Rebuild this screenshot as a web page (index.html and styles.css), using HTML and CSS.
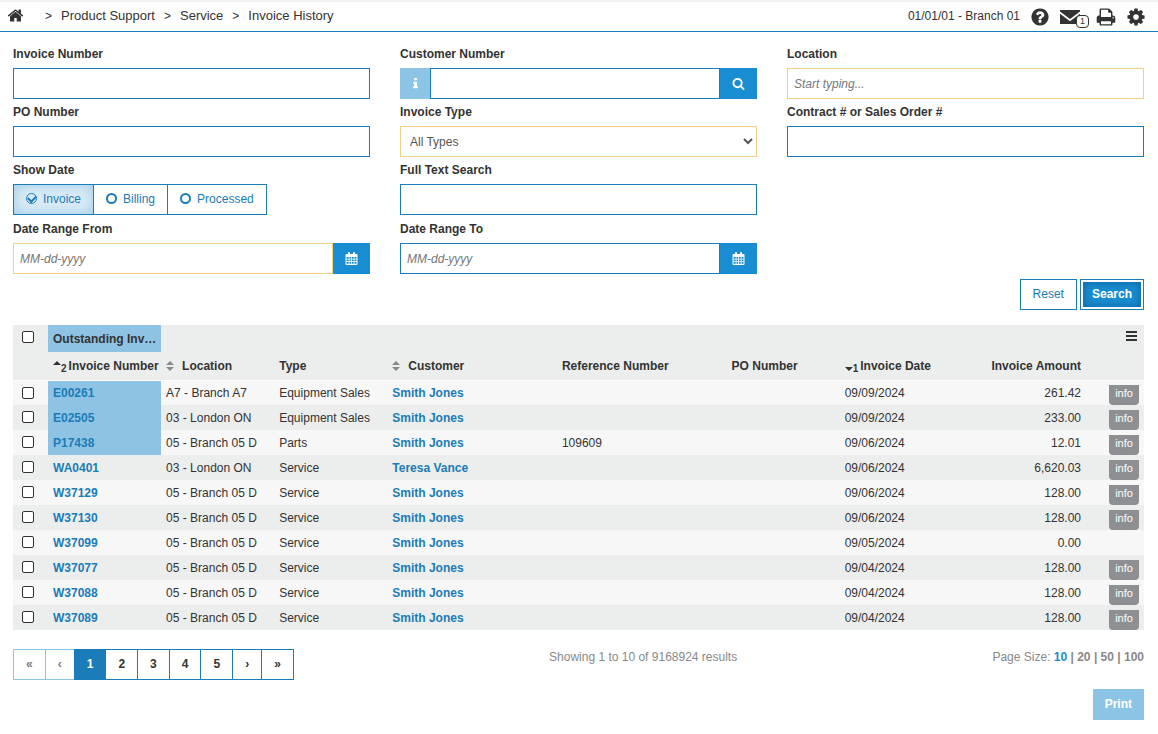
FILE: index.html
```html
<!DOCTYPE html>
<html lang="en">

<head>
    <meta charset="UTF-8">
    <meta name="viewport" content="width=device-width, initial-scale=1.0">
    <title>Invoice History</title>
    <link rel="stylesheet" href="styles.css">
</head>

<body>

    <!-- icon set -->
    <svg class="icon-set" aria-hidden="true">
        <symbol id="home" viewBox="0 0 1792 1792">
            <path d="M1472 992v480q0 26-19 45t-45 19h-384v-384h-256v384h-384q-26 0-45-19t-19-45v-480q0-1 .5-3t.5-3l575-474 575 474q1 2 1 6zm223-69l-62 74q-8 9-21 11h-3q-13 0-21-7l-692-577-692 577q-12 8-24 7-13-2-21-11l-62-74q-8-10-7-23.5t11-21.5l719-599q32-26 76-26t76 26l244 204v-195q0-14 9-23t23-9h192q14 0 23 9t9 23v408l219 182q10 8 11 21.5t-7 23.5z" />
        </symbol>
        <symbol id="help" viewBox="0 0 1792 1792">
            <path d="M1024 1376v-192q0-14-9-23t-23-9h-192q-14 0-23 9t-9 23v192q0 14 9 23t23 9h192q14 0 23-9t9-23zm256-672q0-88-55.500-163t-138.500-116-170-41q-243 0-371 213-15 24 8 42l132 100q7 6 19 6 16 0 25-12 53-68 86-92 34-24 86-24 48 0 85.500 26t37.500 59q0 38-20 61t-68 45q-63 28-115.500 86.500t-52.500 125.500v36q0 14 9 23t23 9h192q14 0 23-9t9-23q0-19 21.500-49.500t54.500-49.500q32-18 49-28.500t46-35 44.500-48 28-60.500 12.500-81zm384 192q0 209-103 385.500t-279.500 279.500-385.500 103-385.500-103-279.500-279.500-103-385.500 103-385.500 279.500-279.500 385.500-103 385.500 103 279.500 279.500 103 385.500z" />
        </symbol>
        <symbol id="mail" viewBox="0 0 20 14">
            <path d="M0 0h20v1.500l-10 7.500-10-7.500zM0 3.700l10 7.500 10-7.500v10.300h-20z" />
        </symbol>
        <symbol id="print" viewBox="0 0 1792 1792">
            <path d="M448 1536h896v-256h-896v256zm0-640h896v-384h-160q-40 0-68-28t-28-68v-160h-640v640zm1152 64q0-26-19-45t-45-19-45 19-19 45 19 45 45 19 45-19 19-45zm128 0v416q0 13-9.500 22.500t-22.500 9.500h-224v160q0 40-28 68t-68 28h-960q-40 0-68-28t-28-68v-160h-224q-13 0-22.500-9.500t-9.500-22.500v-416q0-79 56.500-135.500t135.500-56.500h64v-544q0-40 28-68t68-28h672q40 0 88 20t76 48l152 152q28 28 48 76t20 88v256h64q79 0 135.500 56.500t56.500 135.500z" />
        </symbol>
        <symbol id="cog" viewBox="0 0 1792 1792">
            <path d="M1152 896q0-106-75-181t-181-75-181 75-75 181 75 181 181 75 181-75 75-181zm512-109v222q0 12-8 23t-20 13l-185 28q-19 54-39 91 35 50 107 138 10 12 10 25t-9 23q-27 37-99 108t-94 71q-12 0-26-9l-138-108q-44 23-91 38-16 136-29 186-7 28-36 28h-222q-14 0-24.500-8.500t-11.500-21.500l-28-184q-49-16-90-37l-141 107q-10 9-25 9-14 0-25-11-126-114-165-168-7-10-7-23 0-12 8-23 15-21 51-66.500t54-70.500q-27-50-41-99l-183-27q-13-2-21-12.500t-8-23.500v-222q0-12 8-23t19-13l186-28q14-46 39-92-40-57-107-138-10-12-10-24 0-10 9-23 26-36 98.500-107.500t94.500-71.500q13 0 26 10l138 107q44-23 91-38 16-136 29-186 7-28 36-28h222q14 0 24.500 8.500t11.500 21.500l28 184q49 16 90 37l142-107q9-9 24-9 13 0 25 10 129 119 165 170 7 8 7 22 0 12-8 23-15 21-51 66.500t-54 70.500q26 50 41 98l183 28q13 2 21 12.500t8 23.500z" />
        </symbol>
        <symbol id="info" viewBox="0 0 1792 1792">
            <path d="M1216 1344v128q0 26-19 45t-45 19h-512q-26 0-45-19t-19-45v-128q0-26 19-45t45-19h64v-384h-64q-26 0-45-19t-19-45v-128q0-26 19-45t45-19h384q26 0 45 19t19 45v576h64q26 0 45 19t19 45zm-128-1152v192q0 26-19 45t-45 19h-256q-26 0-45-19t-19-45v-192q0-26 19-45t45-19h256q26 0 45 19t19 45z" />
        </symbol>
        <symbol id="search" viewBox="0 0 1792 1792">
            <path d="M1216 832q0-185-131.500-316.500t-316.500-131.500-316.500 131.500-131.500 316.500 131.500 316.500 316.500 131.500 316.500-131.500 131.500-316.500zm512 832q0 52-38 90t-90 38q-54 0-90-38l-343-342q-179 124-399 124-143 0-273.500-55.500t-225-150-150-225-55.500-273.500 55.500-273.500 150-225 225-150 273.500-55.500 273.500 55.500 225 150 150 225 55.500 273.500q0 220-124 399l343 343q37 37 37 90z" />
        </symbol>
        <symbol id="calendar" viewBox="0 0 12 13">
            <path fill-rule="evenodd" d="M1 2h1.500v-1q0-1 1-1t1 1v1h3v-1q0-1 1-1t1 1v1h1.500q1 0 1 1v9q0 1-1 1h-10q-1 0-1-1v-9q0-1 1-1zM1 5v1.800h2.200v-1.800zM4 5v1.800h1.700v-1.800zM6.500 5v1.800h1.700v-1.800zM9 5v1.800h2v-1.800zM1 7.500v1.800h2.200v-1.800zM4 7.500v1.800h1.700v-1.800zM6.500 7.500v1.800h1.700v-1.800zM9 7.500v1.800h2v-1.800zM1 10v1.800h2.200v-1.800zM4 10v1.800h1.700v-1.800zM6.500 10v1.800h1.700v-1.800zM9 10v1.800h2v-1.800z" />
        </symbol>
        <symbol id="bars" viewBox="0 0 11 10">
            <path d="M0 0h11v2h-11zM0 4h11v2h-11zM0 8h11v2h-11z" />
        </symbol>
        <symbol id="sort" viewBox="0 0 8 10">
            <path d="M4 0l4 4h-8zM4 10l-4-4h8z" />
        </symbol>
        <symbol id="sort-up" viewBox="0 0 8 10">
            <path d="M4 0l4 4h-8z" />
        </symbol>
        <symbol id="sort-down" viewBox="0 0 8 10">
            <path d="M4 10l-4-4h8z" />
        </symbol>
    </svg>

    <header class="topbar">
        <nav class="breadcrumb" aria-label="Breadcrumb">
            <a href="#" class="home" aria-label="Home"><svg class="icon"><use href="#home" /></svg></a>
            <span class="sep">&gt;</span>
            <a href="#">Product Support</a>
            <span class="sep">&gt;</span>
            <a href="#">Service</a>
            <span class="sep">&gt;</span>
            <a href="#">Invoice History</a>
        </nav>
        <div class="tools">
            <span class="branch">01/01/01 - Branch 01</span>
            <a href="#" class="tool" aria-label="Help"><svg class="icon"><use href="#help" /></svg></a>
            <a href="#" class="tool mail" aria-label="Messages"><svg class="icon"><use href="#mail" /></svg><span class="count">1</span></a>
            <a href="#" class="tool" aria-label="Print page"><svg class="icon"><use href="#print" /></svg></a>
            <a href="#" class="tool" aria-label="Settings"><svg class="icon"><use href="#cog" /></svg></a>
        </div>
    </header>

    <main>
        <form>
            <div class="filters">
                <div class="field">
                    <label for="invoice-number">Invoice Number</label>
                    <input type="text" id="invoice-number" class="control">
                </div>
                <div class="field">
                    <label for="customer-number">Customer Number</label>
                    <div class="input-group">
                        <button type="button" class="addon addon-light" aria-label="Customer details"><svg class="icon"><use href="#info" /></svg></button>
                        <input type="text" id="customer-number" class="control">
                        <button type="button" class="addon" aria-label="Find customer"><svg class="icon"><use href="#search" /></svg></button>
                    </div>
                </div>
                <div class="field">
                    <label for="location">Location</label>
                    <input type="text" id="location" class="control accent" placeholder="Start typing...">
                </div>
                <div class="field">
                    <label for="po-number">PO Number</label>
                    <input type="text" id="po-number" class="control">
                </div>
                <div class="field">
                    <label for="invoice-type">Invoice Type</label>
                    <select id="invoice-type" class="control accent">
                        <option>All Types</option>
                    </select>
                </div>
                <div class="field">
                    <label for="contract">Contract # or Sales Order #</label>
                    <input type="text" id="contract" class="control">
                </div>
                <div class="field" role="group" aria-labelledby="show-date">
                    <span class="label" id="show-date">Show Date</span>
                    <div class="radio-group">
                        <label><input type="radio" name="show-date" checked>Invoice</label>
                        <label><input type="radio" name="show-date">Billing</label>
                        <label><input type="radio" name="show-date">Processed</label>
                    </div>
                </div>
                <div class="field">
                    <label for="full-text">Full Text Search</label>
                    <input type="text" id="full-text" class="control">
                </div>
                <div class="field first">
                    <label for="date-from">Date Range From</label>
                    <div class="input-group">
                        <input type="text" id="date-from" class="control accent" placeholder="MM-dd-yyyy">
                        <button type="button" class="addon" aria-label="Pick start date"><svg class="icon"><use href="#calendar" /></svg></button>
                    </div>
                </div>
                <div class="field">
                    <label for="date-to">Date Range To</label>
                    <div class="input-group">
                        <input type="text" id="date-to" class="control" placeholder="MM-dd-yyyy">
                        <button type="button" class="addon" aria-label="Pick end date"><svg class="icon"><use href="#calendar" /></svg></button>
                    </div>
                </div>
            </div>
            <div class="actions">
                <button type="reset" class="btn">Reset</button>
                <button type="button" class="btn btn-search">Search</button>
            </div>
        </form>

        <table class="invoices">
            <colgroup>
                <col class="col-check">
                <col class="col-small">
                <col class="col-small">
                <col class="col-small">
                <col class="col-wide">
                <col class="col-wide">
                <col class="col-small">
                <col class="col-small">
                <col>
                <col class="col-info">
            </colgroup>
            <thead>
                <tr>
                    <th class="check"><input type="checkbox" aria-label="Select all"></th>
                    <th class="outstanding">Outstanding Inv…</th>
                    <th colspan="7"></th>
                    <th class="menu"><button type="button" aria-label="Table menu"><svg class="icon"><use href="#bars" /></svg></button></th>
                </tr>
                <tr class="titles">
                    <th></th>
                    <th><svg class="sort"><use href="#sort-up" /></svg><sub>2</sub>Invoice Number</th>
                    <th><svg class="sort both"><use href="#sort" /></svg>Location</th>
                    <th>Type</th>
                    <th><svg class="sort both"><use href="#sort" /></svg>Customer</th>
                    <th>Reference Number</th>
                    <th>PO Number</th>
                    <th><svg class="sort"><use href="#sort-down" /></svg><sub>1</sub>Invoice Date</th>
                    <th class="amount">Invoice Amount</th>
                    <th></th>
                </tr>
            </thead>
            <tbody>
                <tr>
                    <td class="check"><input type="checkbox" aria-label="Select E00261"></td>
                    <td class="outstanding"><a href="#">E00261</a></td>
                    <td>A7 - Branch A7</td>
                    <td>Equipment Sales</td>
                    <td><a href="#">Smith Jones</a></td>
                    <td></td>
                    <td></td>
                    <td>09/09/2024</td>
                    <td class="amount">261.42</td>
                    <td class="more"><button type="button">info</button></td>
                </tr>
                <tr>
                    <td class="check"><input type="checkbox" aria-label="Select E02505"></td>
                    <td class="outstanding"><a href="#">E02505</a></td>
                    <td>03 - London ON</td>
                    <td>Equipment Sales</td>
                    <td><a href="#">Smith Jones</a></td>
                    <td></td>
                    <td></td>
                    <td>09/09/2024</td>
                    <td class="amount">233.00</td>
                    <td class="more"><button type="button">info</button></td>
                </tr>
                <tr>
                    <td class="check"><input type="checkbox" aria-label="Select P17438"></td>
                    <td class="outstanding"><a href="#">P17438</a></td>
                    <td>05 - Branch 05 D</td>
                    <td>Parts</td>
                    <td><a href="#">Smith Jones</a></td>
                    <td>109609</td>
                    <td></td>
                    <td>09/06/2024</td>
                    <td class="amount">12.01</td>
                    <td class="more"><button type="button">info</button></td>
                </tr>
                <tr>
                    <td class="check"><input type="checkbox" aria-label="Select WA0401"></td>
                    <td><a href="#">WA0401</a></td>
                    <td>03 - London ON</td>
                    <td>Service</td>
                    <td><a href="#">Teresa Vance</a></td>
                    <td></td>
                    <td></td>
                    <td>09/06/2024</td>
                    <td class="amount">6,620.03</td>
                    <td class="more"><button type="button">info</button></td>
                </tr>
                <tr>
                    <td class="check"><input type="checkbox" aria-label="Select W37129"></td>
                    <td><a href="#">W37129</a></td>
                    <td>05 - Branch 05 D</td>
                    <td>Service</td>
                    <td><a href="#">Smith Jones</a></td>
                    <td></td>
                    <td></td>
                    <td>09/06/2024</td>
                    <td class="amount">128.00</td>
                    <td class="more"><button type="button">info</button></td>
                </tr>
                <tr>
                    <td class="check"><input type="checkbox" aria-label="Select W37130"></td>
                    <td><a href="#">W37130</a></td>
                    <td>05 - Branch 05 D</td>
                    <td>Service</td>
                    <td><a href="#">Smith Jones</a></td>
                    <td></td>
                    <td></td>
                    <td>09/06/2024</td>
                    <td class="amount">128.00</td>
                    <td class="more"><button type="button">info</button></td>
                </tr>
                <tr>
                    <td class="check"><input type="checkbox" aria-label="Select W37099"></td>
                    <td><a href="#">W37099</a></td>
                    <td>05 - Branch 05 D</td>
                    <td>Service</td>
                    <td><a href="#">Smith Jones</a></td>
                    <td></td>
                    <td></td>
                    <td>09/05/2024</td>
                    <td class="amount">0.00</td>
                    <td></td>
                </tr>
                <tr>
                    <td class="check"><input type="checkbox" aria-label="Select W37077"></td>
                    <td><a href="#">W37077</a></td>
                    <td>05 - Branch 05 D</td>
                    <td>Service</td>
                    <td><a href="#">Smith Jones</a></td>
                    <td></td>
                    <td></td>
                    <td>09/04/2024</td>
                    <td class="amount">128.00</td>
                    <td class="more"><button type="button">info</button></td>
                </tr>
                <tr>
                    <td class="check"><input type="checkbox" aria-label="Select W37088"></td>
                    <td><a href="#">W37088</a></td>
                    <td>05 - Branch 05 D</td>
                    <td>Service</td>
                    <td><a href="#">Smith Jones</a></td>
                    <td></td>
                    <td></td>
                    <td>09/04/2024</td>
                    <td class="amount">128.00</td>
                    <td class="more"><button type="button">info</button></td>
                </tr>
                <tr>
                    <td class="check"><input type="checkbox" aria-label="Select W37089"></td>
                    <td><a href="#">W37089</a></td>
                    <td>05 - Branch 05 D</td>
                    <td>Service</td>
                    <td><a href="#">Smith Jones</a></td>
                    <td></td>
                    <td></td>
                    <td>09/04/2024</td>
                    <td class="amount">128.00</td>
                    <td class="more"><button type="button">info</button></td>
                </tr>
            </tbody>
        </table>

        <div class="table-footer">
            <nav class="pagination" aria-label="Pages">
                <a href="#" class="disabled">«</a>
                <a href="#" class="disabled">‹</a>
                <a href="#" class="active">1</a>
                <a href="#">2</a>
                <a href="#">3</a>
                <a href="#">4</a>
                <a href="#">5</a>
                <a href="#">›</a>
                <a href="#">»</a>
            </nav>
            <div class="results">Showing 1 to 10 of 9168924 results</div>
            <div class="page-size">Page Size: <b><a href="#" class="current">10</a> | <a href="#">20</a> | <a href="#">50</a> | <a href="#">100</a></b></div>
        </div>

        <div class="print-row">
            <button type="button" class="btn btn-print">Print</button>
        </div>
    </main>

</body>

</html>
```
FILE: styles.css
```css
* {
    box-sizing: border-box;
}

body {
    margin: 0;
    font-family: "Liberation Sans", Arial, sans-serif;
    font-size: 12px;
    line-height: 20px;
    color: #333;
    background-color: #fff;
}

a {
    color: inherit;
    text-decoration: none;
}

button,
input,
select {
    font: inherit;
    color: inherit;
    margin: 0;
}

button {
    padding: 0;
    border: none;
    cursor: pointer;
}

.icon-set {
    display: none;
}

.icon {
    display: block;
    width: 14px;
    height: 14px;
    fill: currentColor;
}

/* Top bar */
.topbar {
    display: flex;
    justify-content: space-between;
    align-items: center;
    height: 32px;
    padding: 0 12px 0 7px;
    border-top: 2px solid #f2f2f2;
    border-bottom: 1px solid #1a7cb8;
}

.breadcrumb {
    display: flex;
    align-items: center;
    gap: 9px;
    padding-bottom: 2px;
    font-size: 13px;
}

.home {
    margin-right: 12px;
}

.home .icon {
    width: 17px;
    height: 17px;
}

.sep {
    font-size: 12px;
}

.tools {
    display: flex;
    align-items: center;
    gap: 10px;
}

.branch {
    padding-bottom: 2px;
}

.tool .icon {
    width: 20px;
    height: 20px;
}

.mail {
    position: relative;
    width: 26px;
}

.count {
    position: absolute;
    left: 16px;
    top: 8px;
    width: 13px;
    height: 13px;
    border: 1px solid #333;
    border-radius: 4px;
    background-color: #fff;
    font-size: 9px;
    line-height: 11px;
    text-align: center;
}

/* Search form */
main {
    padding: 12px 14px 14px 13px;
}

.filters {
    display: grid;
    grid-template-columns: repeat(3, 1fr);
    gap: 3px 30px;
}

.first {
    grid-column: 1;
}

.field > label,
.label {
    display: block;
    margin-bottom: 4px;
    font-weight: bold;
}

.control {
    display: block;
    width: 100%;
    height: 31px;
    padding: 0 6px;
    border: 1px solid #1a7cb8;
    border-radius: 0;
    background-color: #fff;
}

select.control {
    padding: 0 5px;
    color: #555;
}

.accent {
    border-color: #f3cf86;
}

.control::placeholder {
    color: #777;
    font-style: italic;
}

.input-group {
    display: flex;
}

.input-group .control {
    flex: 1;
    min-width: 0;
}

.addon {
    display: flex;
    justify-content: center;
    align-items: center;
    width: 37px;
    background-color: #188dd1;
    color: #fff;
}

.addon-light {
    width: 30px;
    background-color: #8cc4e6;
}

.addon .icon {
    width: 13px;
    height: 13px;
}

.radio-group {
    display: flex;
    margin-bottom: 1px;
}

.radio-group label {
    display: flex;
    align-items: center;
    gap: 6px;
    height: 31px;
    padding: 0 12px 2px;
    border: 1px solid #1a7cb8;
    color: #1a7cb8;
}

.radio-group label + label {
    margin-left: -1px;
}

.radio-group label:has(:checked) {
    background-color: #dcecf7;
    box-shadow: inset 0 0 14px #9ccae8;
}

.radio-group input {
    appearance: none;
    display: flex;
    justify-content: center;
    align-items: center;
    width: 11px;
    height: 11px;
    border: 2px solid #1a7cb8;
    border-radius: 50%;
}

.radio-group input:checked {
    border-width: 1px;
}

.radio-group input:checked::before {
    content: "";
    width: 4px;
    height: 6px;
    margin-bottom: 2px;
    border: solid #1a7cb8;
    border-width: 0 2px 2px 0;
    transform: rotate(45deg);
}

.actions {
    display: flex;
    justify-content: flex-end;
    gap: 3px;
    margin: 5px 0 15px;
}

.btn {
    height: 31px;
    padding: 0 12px 2px;
    border: 1px solid #1a7cb8;
    background-color: #fff;
    color: #1a7cb8;
}

.btn-search,
.btn-print {
    padding: 0 11px 2px;
    color: #fff;
    font-weight: bold;
}

.btn-search {
    background-color: #188dd1;
    box-shadow: inset 0 0 0 2px #fff, inset 0 0 10px 2px #10639c;
}

.btn-print {
    border-color: #8cc4e6;
    background-color: #8cc4e6;
}

/* Invoice table */
.invoices {
    width: 100%;
    table-layout: fixed;
    border-collapse: collapse;
}

.col-check {
    width: 35px;
}

.col-small {
    width: 10%;
}

.col-wide {
    width: 15%;
}

.col-info {
    width: 58px;
}

.invoices th,
.invoices td {
    height: 25px;
    padding: 0 5px;
    text-align: left;
    white-space: nowrap;
}

.invoices th {
    height: 27px;
    padding-right: 0;
    background-color: #eceeee;
}

.invoices .titles th {
    height: 28px;
}

.invoices thead {
    border-bottom: 1px solid #fff;
}

.invoices tbody tr {
    background-color: #f7f7f7;
}

.invoices tbody tr:nth-child(even) {
    background-color: #eceeee;
}

.invoices td a {
    color: #1a7cb8;
    font-weight: bold;
}

.invoices .outstanding {
    background-color: #8ec3e3;
}

.invoices .amount {
    padding-right: 5px;
    text-align: right;
}

.invoices .check {
    padding: 6px 0 0 9px;
    vertical-align: top;
}

.check input {
    appearance: none;
    display: block;
    width: 12px;
    height: 12px;
    border: 1px solid #333;
    border-radius: 2px;
    background-color: #fff;
}

.invoices .menu {
    padding-top: 6px;
    vertical-align: top;
}

.menu button {
    float: right;
    margin-right: 7px;
    background: none;
}

.menu .icon {
    width: 11px;
    height: 10px;
}

.sort {
    width: 8px;
    height: 10px;
    fill: #333;
    vertical-align: -1px;
}

.both {
    margin-right: 8px;
    fill: #888;
}

.invoices sub {
    margin-right: 2px;
    font-size: 10px;
    line-height: 0;
    vertical-align: -2px;
}

.invoices .more {
    vertical-align: bottom;
}

.more button {
    display: block;
    width: 30px;
    height: 20px;
    margin-left: auto;
    padding-bottom: 4px;
    border-radius: 0 0 4px 4px;
    background-color: #8e8f92;
    color: #fff;
    font-size: 11px;
    line-height: 16px;
}

/* Below the table */
.table-footer {
    display: flex;
    justify-content: space-between;
    margin-top: 19px;
    color: #888;
}

.pagination {
    display: flex;
    font-weight: bold;
    line-height: 29px;
    color: #333;
}

.pagination a {
    padding: 0 12px;
    border: 1px solid #1a7cb8;
}

.pagination a + a {
    margin-left: -1px;
}

.pagination .disabled {
    border-color: #8cc4e6;
    color: #777;
}

.pagination .active {
    border-color: #1a7cb8;
    background-color: #1a7cb8;
    color: #fff;
}

.results,
.page-size {
    line-height: 16px;
}

.page-size .current {
    color: #188dd1;
}

.print-row {
    display: flex;
    justify-content: flex-end;
    margin-top: 9px;
}
```
